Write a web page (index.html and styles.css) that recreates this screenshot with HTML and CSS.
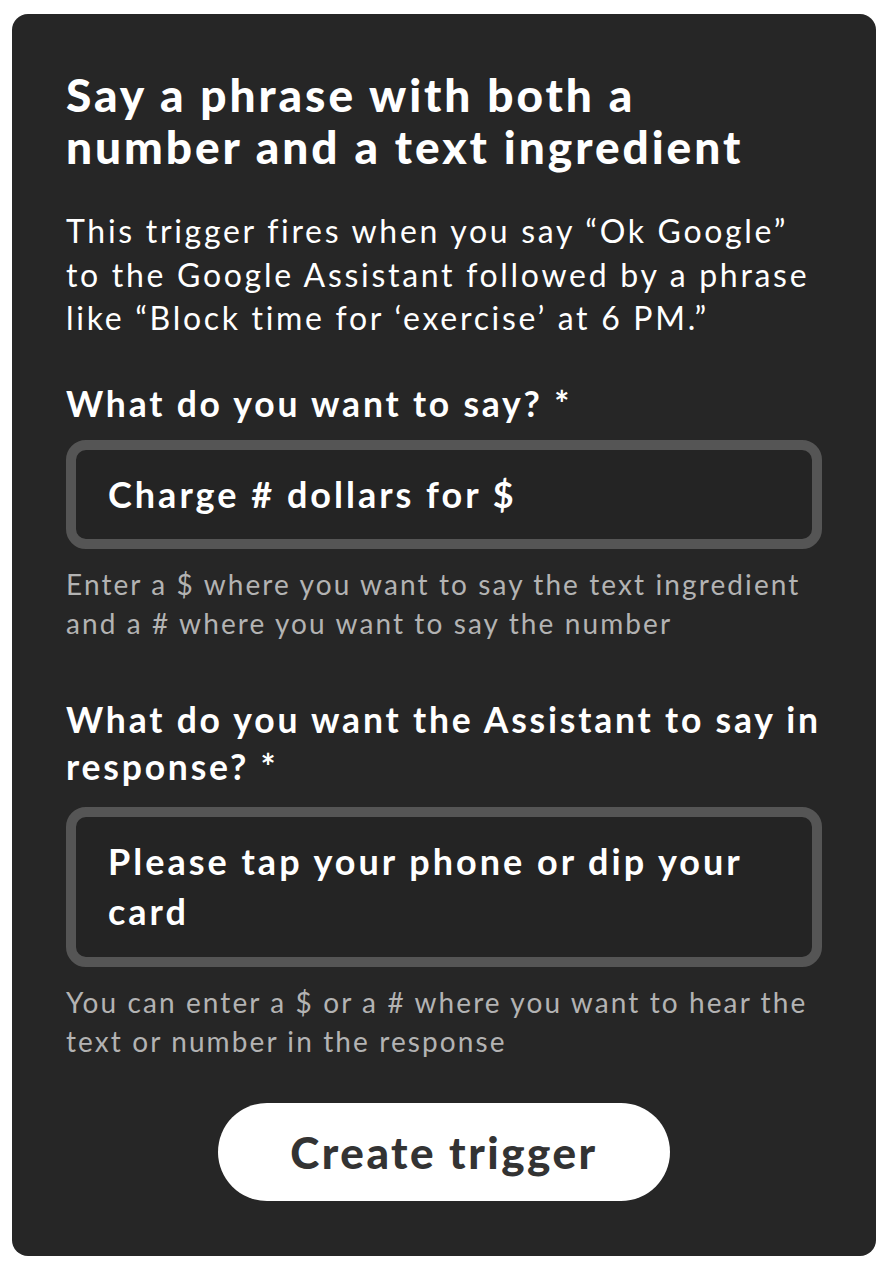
FILE: index.html
```html
<!DOCTYPE html>
<html lang="en">
<head>
<meta charset="utf-8">
<title>Create trigger</title>
<link rel="stylesheet" href="styles.css">
</head>
<body>
<main class="card">
  <h1 class="title">Say a phrase with both a number and a text ingredient</h1>
  <p class="desc">This trigger fires when you say “Ok Google” to the Google Assistant followed by a phrase like “Block time for ‘exercise’ at 6 PM.”</p>

  <div class="field">
    <label class="label">What do you want to say? *</label>
    <div class="input input-one">Charge # dollars for $</div>
    <p class="help">Enter a $ where you want to say the text ingredient and a # where you want to say the number</p>
  </div>

  <div class="field field-two">
    <label class="label">What do you want the Assistant to say in response? *</label>
    <div class="input input-two">Please tap your phone or dip your card</div>
    <p class="help">You can enter a $ or a # where you want to hear the text or number in the response</p>
  </div>

  <div class="actions">
    <button class="btn" type="button">Create trigger</button>
  </div>
</main>
</body>
</html>
```

FILE: styles.css
```css
html, body {
  margin: 0;
  padding: 0;
  background: #ffffff;
}

body {
  font-family: Lato, "Noto Sans", sans-serif;
  color: #ffffff;
}

.card {
  box-sizing: border-box;
  width: 864px;
  height: 1242px;
  margin: 14px 0 0 12px;
  padding: 55px 54px 54px 54px;
  background: #262626;
  border-radius: 16px;
  display: flex;
  flex-direction: column;
}

.title {
  margin: 0;
  max-width: 710px;
  font-size: 46px;
  line-height: 52px;
  font-weight: 900;
  letter-spacing: 2.95px;
}

.desc {
  margin: 36px 0 0 0;
  font-size: 32px;
  line-height: 43.5px;
  font-weight: 400;
  letter-spacing: 2.7px;
}

.field {
  display: flex;
  flex-direction: column;
  margin-top: 40px;
}

.field-two {
  margin-top: 53px;
}

.label {
  font-size: 35.5px;
  line-height: 47px;
  font-weight: 700;
  letter-spacing: 2.8px;
}

.input {
  box-sizing: border-box;
  margin-top: 13px;
  border: 10px solid #555555;
  border-radius: 20px;
  background: #242424;
  padding: 0 32px;
  font-size: 36px;
  font-weight: 700;
  letter-spacing: 3px;
  color: #ffffff;
}

.input-one {
  height: 109px;
  display: flex;
  align-items: center;
}

.input-two {
  margin-top: 17px;
  padding-top: 19px;
  padding-bottom: 21px;
  line-height: 50px;
}

.help {
  margin: 16px 0 0 0;
  font-size: 28px;
  line-height: 39px;
  letter-spacing: 2.1px;
  color: #b3b3b3;
}

.actions {
  display: flex;
  justify-content: center;
  margin-top: 42px;
}

.btn {
  width: 452px;
  height: 98px;
  border: none;
  border-radius: 49px;
  background: #ffffff;
  color: #333333;
  font-family: Lato, "Noto Sans", sans-serif;
  font-size: 44px;
  font-weight: 900;
  letter-spacing: 2.5px;
  cursor: pointer;
}
```
